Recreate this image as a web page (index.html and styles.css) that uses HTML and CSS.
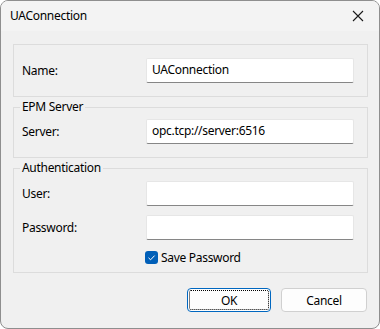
FILE: index.html
```html
<!DOCTYPE html>
<html lang="en">
<head>
  <meta charset="UTF-8" />
  <title>UAConnection</title>
  <link rel="stylesheet" href="styles.css">
</head>
<body>

  <div class="window">

    <!-- TITLE BAR -->
    <div class="titlebar">
      <span class="title">UAConnection</span>
      <svg class="close" width="12" height="12" viewBox="0 0 12 12">
        <path d="M1 1 L11 11 M11 1 L1 11" stroke="#1a1a1a" stroke-width="1.1" fill="none" />
      </svg>
    </div>

    <div class="content">

      <fieldset class="group plain">
        <div class="row">
          <label>Name:</label>
          <div class="field">UAConnection</div>
        </div>
      </fieldset>

      <fieldset class="group">
        <legend>EPM Server</legend>
        <div class="row">
          <label>Server:</label>
          <div class="field">opc.tcp://server:6516</div>
        </div>
      </fieldset>

      <fieldset class="group auth">
        <legend>Authentication</legend>
        <div class="row">
          <label>User:</label>
          <div class="field"></div>
        </div>
        <div class="row">
          <label>Password:</label>
          <div class="field"></div>
        </div>
        <div class="row check-row">
          <span></span>
          <div class="check">
            <svg class="box" width="13" height="13" viewBox="0 0 13 13">
              <rect x="0" y="0" width="13" height="13" rx="3" fill="#005fb8" />
              <path d="M3.5 6.8 L5.6 8.8 L9.6 4.6" stroke="#ffffff" stroke-width="1" fill="none" />
            </svg>
            <span>Save Password</span>
          </div>
        </div>
      </fieldset>

      <div class="buttons">
        <button class="btn default">OK</button>
        <button class="btn">Cancel</button>
      </div>

    </div>
  </div>

</body>
</html>
```

FILE: styles.css
```css
* {
  box-sizing: border-box;
  margin: 0;
  padding: 0;
}

body {
  font-family: 'Noto Sans', 'Segoe UI', sans-serif;
  font-size: 12px;
  letter-spacing: -0.3px;
  color: #000;
  background: #ffffff;
}

.window {
  width: 380px;
  height: 329px;
  border: 1px solid #8e8e8e;
  border-radius: 8px;
  background: #f0f0f0;
  overflow: hidden;
  display: flex;
  flex-direction: column;
}

.titlebar {
  height: 30px;
  background: #f3f3f3;
  display: flex;
  align-items: center;
  justify-content: space-between;
  padding: 0 15px 0 9px;
}

.title {
  line-height: 16px;
}

.content {
  padding: 13px 11px 0 12px;
  display: flex;
  flex-direction: column;
}

.group {
  border: 1px solid #dcdcdc;
  padding: 4px 12px 13px 6px;
  margin-top: 2px;
  display: flex;
  flex-direction: column;
  gap: 9px;
}

.group.plain {
  margin-top: 0;
  padding-top: 13px;
  padding-bottom: 13px;
}

.group.auth {
  padding-top: 5px;
  padding-bottom: 8px;
}

legend {
  padding: 0 2px;
  line-height: 16px;
  color: #000;
}

.row {
  display: grid;
  grid-template-columns: 124px 208px;
  align-items: center;
  padding-left: 2px;
}

.field {
  height: 25px;
  background: #ffffff;
  border: 1px solid #e6e6e6;
  border-bottom-color: #868686;
  border-radius: 2px;
  padding: 0 5px;
  line-height: 22px;
  white-space: nowrap;
}

.check-row {
  height: 13px;
  margin-top: 2px;
}

.check {
  display: flex;
  align-items: center;
  gap: 3px;
  margin-left: -1px;
  height: 13px;
}

.check .box {
  display: block;
}

.buttons {
  display: flex;
  justify-content: flex-end;
  gap: 10px;
  margin-top: 15px;
  padding-right: 1px;
}

.btn {
  font-family: inherit;
  font-size: 12px;
  letter-spacing: inherit;
  width: 86px;
  height: 24px;
  background: #fdfdfd;
  border: 1px solid #d0d0d0;
  border-radius: 4px;
  color: #000;
}

.btn.default {
  width: 84px;
  border-color: #0067c0;
  outline: 1px dotted #000;
  outline-offset: -3px;
}
```
